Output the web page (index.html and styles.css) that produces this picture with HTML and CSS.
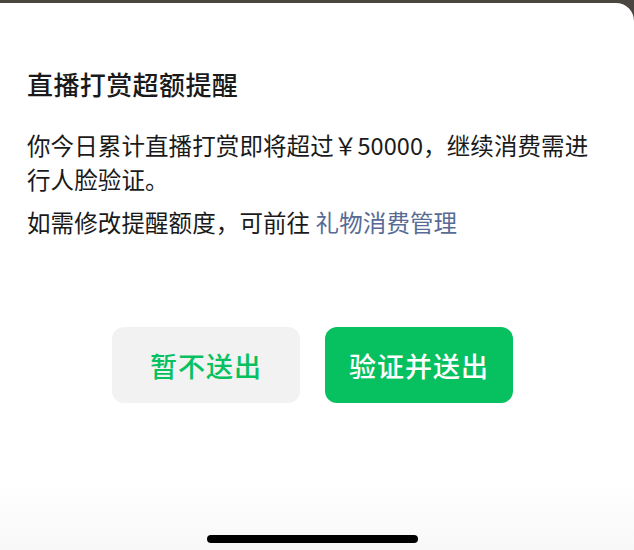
FILE: index.html
```html
<!DOCTYPE html>
<html lang="zh-CN">
<head>
  <meta charset="UTF-8" />
  <meta name="viewport" content="width=device-width, initial-scale=1.0"/>
  <title>直播打赏超额提醒</title>
  <link rel="stylesheet" href="styles.css">
</head>
<body>

  <div class="hoja">
    <h1 class="titulo">直播打赏超额提醒</h1>
    <p class="texto">你今日累计直播打赏即将超过￥50000，继续消费需进行人脸验证。</p>
    <p class="texto">如需修改提醒额度，可前往 <a href="#">礼物消费管理</a></p>

    <div class="acciones">
      <button class="btn btn-gris">暂不送出</button>
      <button class="btn btn-verde">验证并送出</button>
    </div>

    <div class="indicador"></div>
  </div>

</body>
</html>
```

FILE: styles.css
```css
* {
  box-sizing: border-box;
  margin: 0;
  padding: 0;
}

body {
  font-family: "Noto Sans CJK SC", "Noto Sans", sans-serif;
  background: #4b4540;
  height: 550px;
  overflow: hidden;
}

.hoja {
  margin-top: 3px;
  height: 547px;
  background: linear-gradient(#ffffff 88%, #f8f8f8);
  border-top-right-radius: 18px;
  padding: 0 27px;
  display: flex;
  flex-direction: column;
}

.titulo {
  margin-top: 63px;
  font-size: 26px;
  line-height: 36px;
  font-weight: 500;
  letter-spacing: 0.4px;
  color: #1a1a1a;
}

.texto {
  font-size: 23.5px;
  line-height: 34px;
  letter-spacing: 0.1px;
  color: #1a1a1a;
  margin-top: 9px;
}

.titulo + .texto {
  margin-top: 26px;
}

.texto a {
  color: #576b95;
  text-decoration: none;
}

.acciones {
  display: flex;
  gap: 25px;
  margin-top: 88px;
  margin-left: 85px;
}

.btn {
  width: 188px;
  height: 76px;
  border: none;
  border-radius: 12px;
  font-family: inherit;
  font-size: 27px;
  font-weight: 500;
  letter-spacing: 1px;
  cursor: pointer;
}

.btn-gris {
  background: #f2f2f2;
  color: #07c160;
}

.btn-verde {
  background: #07c160;
  color: #ffffff;
}

.indicador {
  margin-top: auto;
  margin-bottom: 7px;
  margin-left: 180px;
  width: 211px;
  height: 8px;
  border-radius: 4px;
  background: #000000;
}
```
